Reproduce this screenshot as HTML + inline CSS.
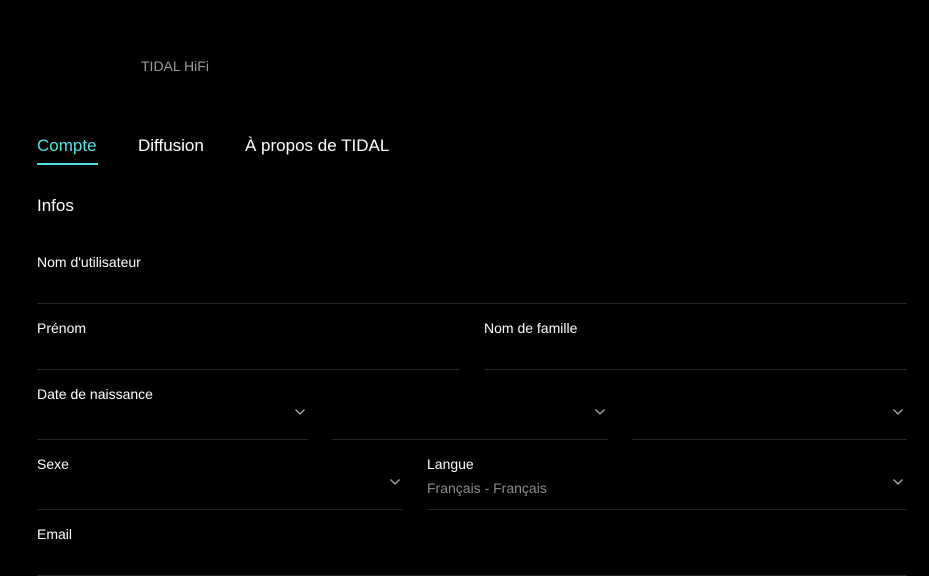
<!DOCTYPE html>
<html><head><meta charset="utf-8"><style>
body{margin:0;width:929px;height:576px;background:#000;overflow:hidden;font-family:"Liberation Sans",sans-serif;position:relative}
.t{position:absolute;white-space:nowrap;color:#fff}
.l{position:absolute;height:1px;background:#262626}
.c{position:absolute;width:10px;height:6px}
</style></head><body>
<div class="t" style="left:141px;top:58px;font-size:14px;color:#9a9a9a">TIDAL HiFi</div>
<div class="t" style="left:37px;top:136px;font-size:17px;color:#4ee3e0">Compte</div>
<div style="position:absolute;left:37px;top:163px;width:61px;height:2px;background:#4ee3e0"></div>
<div class="t" style="left:138px;top:136px;font-size:17px">Diffusion</div>
<div class="t" style="left:245px;top:136px;font-size:17px">À propos de TIDAL</div>
<div class="t" style="left:37px;top:196px;font-size:17px">Infos</div>
<div class="t" style="left:37px;top:254px;font-size:14px">Nom d'utilisateur</div>
<div class="l" style="left:37px;top:303px;width:870px"></div>
<div class="t" style="left:37px;top:320px;font-size:14px">Prénom</div>
<div class="t" style="left:484px;top:320px;font-size:14px">Nom de famille</div>
<div class="l" style="left:37px;top:369px;width:423px"></div>
<div class="l" style="left:484px;top:369px;width:423px"></div>
<div class="t" style="left:37px;top:386px;font-size:14px">Date de naissance</div>
<div class="l" style="left:37px;top:439px;width:271px"></div>
<div class="l" style="left:332px;top:439px;width:276px"></div>
<div class="l" style="left:632px;top:439px;width:275px"></div>
<div class="t" style="left:37px;top:456px;font-size:14px">Sexe</div>
<div class="t" style="left:427px;top:456px;font-size:14px">Langue</div>
<div class="t" style="left:427px;top:480px;font-size:14px;color:#8a8a8a">Français - Français</div>
<div class="l" style="left:37px;top:509px;width:366px"></div>
<div class="l" style="left:427px;top:509px;width:480px"></div>
<div class="t" style="left:37px;top:526px;font-size:14px">Email</div>
<div class="l" style="left:37px;top:575px;width:870px"></div>
<svg class="c" style="left:295px;top:409px" viewBox="0 0 10 6"><path d="M0.5 0.5L5 5L9.5 0.5" stroke="#aaa" fill="none" stroke-width="1.3"/></svg>
<svg class="c" style="left:595px;top:409px" viewBox="0 0 10 6"><path d="M0.5 0.5L5 5L9.5 0.5" stroke="#aaa" fill="none" stroke-width="1.3"/></svg>
<svg class="c" style="left:893px;top:409px" viewBox="0 0 10 6"><path d="M0.5 0.5L5 5L9.5 0.5" stroke="#aaa" fill="none" stroke-width="1.3"/></svg>
<svg class="c" style="left:390px;top:479px" viewBox="0 0 10 6"><path d="M0.5 0.5L5 5L9.5 0.5" stroke="#aaa" fill="none" stroke-width="1.3"/></svg>
<svg class="c" style="left:893px;top:479px" viewBox="0 0 10 6"><path d="M0.5 0.5L5 5L9.5 0.5" stroke="#aaa" fill="none" stroke-width="1.3"/></svg>
</body></html>
